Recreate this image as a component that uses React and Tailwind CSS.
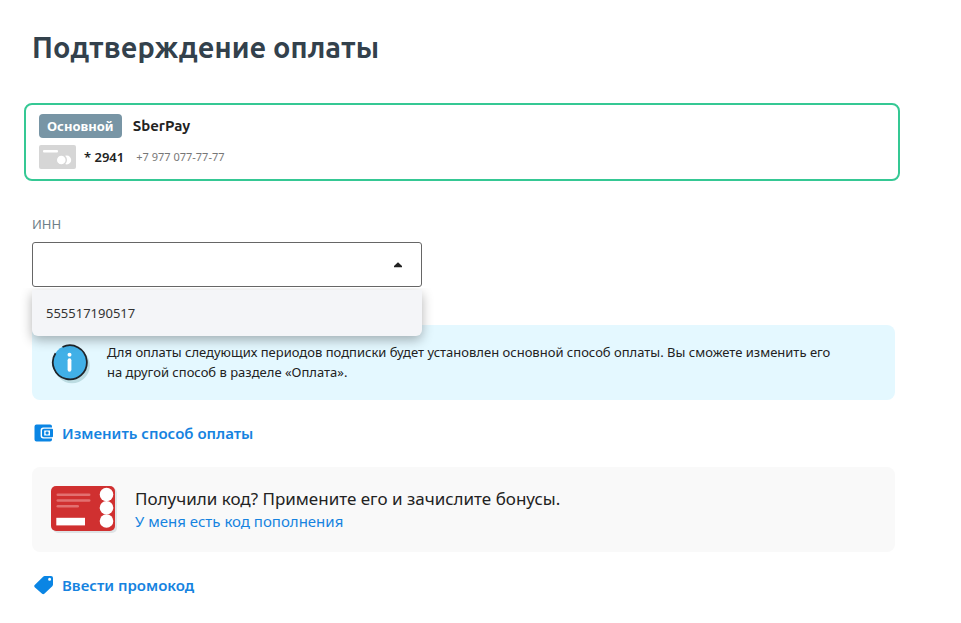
import { useState } from "react";

function CardIcon() {
  return (
    <svg width="37" height="24" viewBox="0 0 37 24" aria-hidden="true" className="shrink-0">
      <rect width="37" height="24" rx="2" fill="#d6d6d6" />
      <rect x="4" y="5" width="15" height="2.4" rx="1" fill="#fff" />
      <circle cx="27.8" cy="15" r="4.4" fill="#fff" />
      <circle cx="22.3" cy="15" r="5" fill="#fff" stroke="#d6d6d6" strokeWidth="1.4" />
    </svg>
  );
}

function InfoIcon() {
  return (
    <svg width="40" height="40" viewBox="0 0 40 40" aria-hidden="true" className="mt-0.5 shrink-0">
      <circle cx="21" cy="21.5" r="17.8" fill="#bcdce2" />
      <circle cx="18.5" cy="18.5" r="17" fill="#41b0e7" />
      <path d="M11.5 3 A17 17 0 1 1 4.5 9.2" fill="none" stroke="#1f2429" strokeWidth="1.8" />
      <circle cx="18.5" cy="10.7" r="2" fill="#fff" />
      <rect x="16.6" y="14.3" width="3.8" height="13.4" rx="1.9" fill="#fff" />
    </svg>
  );
}

function WalletIcon() {
  return (
    <svg width="20" height="20" viewBox="0 0 20 20" aria-hidden="true" className="shrink-0">
      <path
        d="M2.5 1.6H16Q18 1.6 18 3.6V4.6H9.2Q6.6 4.6 6.6 7.2V12.8Q6.6 15.4 9.2 15.4H18V16.6Q18 18.6 16 18.6H2.5Q.5 18.6 .5 16.6V3.6Q.5 1.6 2.5 1.6Z"
        fill="#0a85e4"
      />
      <path
        fillRule="evenodd"
        d="M9.8 5.8H18Q19 5.8 19 6.8V13.2Q19 14.2 18 14.2H9.8Q8 14.2 8 12.4V7.6Q8 5.8 9.8 5.8ZM10.2 7.6V12.4H16V7.6Z"
        fill="#0a85e4"
      />
      <rect x="11.6" y="8.6" width="3" height="2.8" rx="1" fill="#0a85e4" />
    </svg>
  );
}

function TagIcon() {
  return (
    <svg width="20" height="20" viewBox="0 0 20 20" aria-hidden="true" className="shrink-0">
      <path
        fillRule="evenodd"
        d="M10.7 1H17Q19 1 19 3V9.6Q19 10.5 18.3 11.2L10.3 18.8Q9.2 19.7 8.1 18.8L.7 12.2Q-.3 11.1 .7 10L9.1 1.7Q9.8 1 10.7 1ZM15.6 2.7A1.5 1.5 0 1 0 15.6 5.7A1.5 1.5 0 1 0 15.6 2.7Z"
        fill="#0a85e4"
      />
    </svg>
  );
}

function VoucherIcon() {
  return (
    <svg width="66" height="47" viewBox="0 0 66 47" aria-hidden="true" className="shrink-0">
      <rect x="2" y="2" width="64" height="45" rx="5" fill="#dfe3e5" />
      <rect width="64" height="45" rx="5" fill="#d03030" />
      <g fill="#e27070">
        <rect x="5.5" y="7.5" width="34" height="2.6" rx="1.3" />
        <rect x="5.5" y="13.2" width="34" height="2.6" rx="1.3" />
        <rect x="5.5" y="19" width="22.5" height="2.6" rx="1.3" />
      </g>
      <g fill="#fff">
        <rect x="5.3" y="31.8" width="28.7" height="7.6" />
        <circle cx="55.5" cy="8.5" r="6.8" />
        <circle cx="55.5" cy="21.7" r="6.8" />
        <circle cx="55.5" cy="35" r="6.8" />
      </g>
    </svg>
  );
}

export default function App() {
  const [open, setOpen] = useState(true);
  const [inn, setInn] = useState("");

  return (
    <main className="pt-[27px] pr-[66px] pb-7 pl-8 font-['Noto_Sans','Open_Sans',sans-serif] text-[#222]">
      <h1 className="font-[Ubuntu,'Noto_Sans',sans-serif] text-[29px] leading-10 font-bold text-[#33414c]">
        Подтверждение оплаты
      </h1>

      <section className="mt-9 -mr-[5px] -ml-2 flex flex-col gap-[7px] rounded-lg border-2 border-[#35c894] px-[13px] pt-[9px] pb-[10px]">
        <div className="flex items-center gap-[11px]">
          <span className="rounded bg-[#7895a5] px-2 text-[13px] leading-6 font-bold text-white">
            Основной
          </span>
          <strong className="font-[Ubuntu,'Noto_Sans',sans-serif] text-[15px] leading-6 font-bold">SberPay</strong>
        </div>
        <div className="flex items-center gap-2">
          <CardIcon />
          <span className="text-[13px] leading-6 font-semibold">* 2941</span>
          <span className="ml-1 text-[11px] leading-6 text-[#777]">+7 977 077-77-77</span>
        </div>
      </section>

      <div className="mt-[33px] max-w-[390px]">
        <label htmlFor="inn" className="block text-[13px] leading-5 text-[#6f7f88]">
          ИНН
        </label>
        <div className="relative mt-2">
          <div className="flex h-[45px] items-center rounded-[3px] border border-[#666] bg-white">
            <input
              id="inn"
              role="combobox"
              aria-expanded={open}
              aria-controls="inn-options"
              value={inn}
              onChange={(e) => setInn(e.target.value)}
              className="h-full min-w-0 flex-1 bg-transparent px-[14px] text-[13px] outline-none"
            />
            <button
              type="button"
              aria-label="Показать варианты"
              onClick={() => setOpen(!open)}
              className="flex h-full w-[46px] items-center justify-center"
            >
              <svg width="8" height="6" viewBox="0 0 8 6" aria-hidden="true">
                <path d="M4 0.3 L8 4 V5.3 H0 V4 Z" fill="#222" />
              </svg>
            </button>
          </div>
          {open && (
            <ul
              id="inn-options"
              role="listbox"
              aria-label="ИНН"
              className="absolute inset-x-0 top-full mt-[3px] rounded-b-md bg-[#f4f5f8] shadow-[0_4px_12px_rgba(0,0,0,0.3)] [clip-path:inset(-2px_-20px_-24px_-20px)]"
            >
              <li
                role="option"
                aria-selected={false}
                onClick={() => {
                  setInn("555517190517");
                  setOpen(false);
                }}
                className="px-[14px] py-[13px] text-[13px] leading-5 text-[#333]"
              >
                555517190517
              </li>
            </ul>
          )}
        </div>
      </div>

      <section className="mt-[38px] flex gap-4 rounded-lg bg-[#e4f8ff] px-[19px] pt-[17px] pb-4">
        <InfoIcon />
        <p className="max-w-[740px] text-[13px] leading-5">
          Для оплаты следующих периодов подписки будет установлен основной способ оплаты. Вы сможете изменить его
          на другой способ в разделе «Оплата».
        </p>
      </section>

      <a href="#method" className="mt-[21px] flex w-fit items-center gap-2 pl-0.5 text-[15px] leading-6 font-semibold text-[#1583e0]">
        <WalletIcon />
        Изменить способ оплаты
      </a>

      <section className="mt-[22px] flex items-center gap-[18px] rounded-lg bg-[#f9f9f9] px-[19px] py-[19px]">
        <VoucherIcon />
        <div>
          <p className="text-[17px] leading-[23px]">Получили код? Примените его и зачислите бонусы.</p>
          <a href="#code" className="block w-fit text-[15px] leading-[23px] text-[#1583e0]">
            У меня есть код пополнения
          </a>
        </div>
      </section>

      <a href="#promo" className="mt-[21px] flex w-fit items-center gap-2 pl-0.5 text-[15px] leading-6 font-semibold text-[#1583e0]">
        <TagIcon />
        Ввести промокод
      </a>
    </main>
  );
}
